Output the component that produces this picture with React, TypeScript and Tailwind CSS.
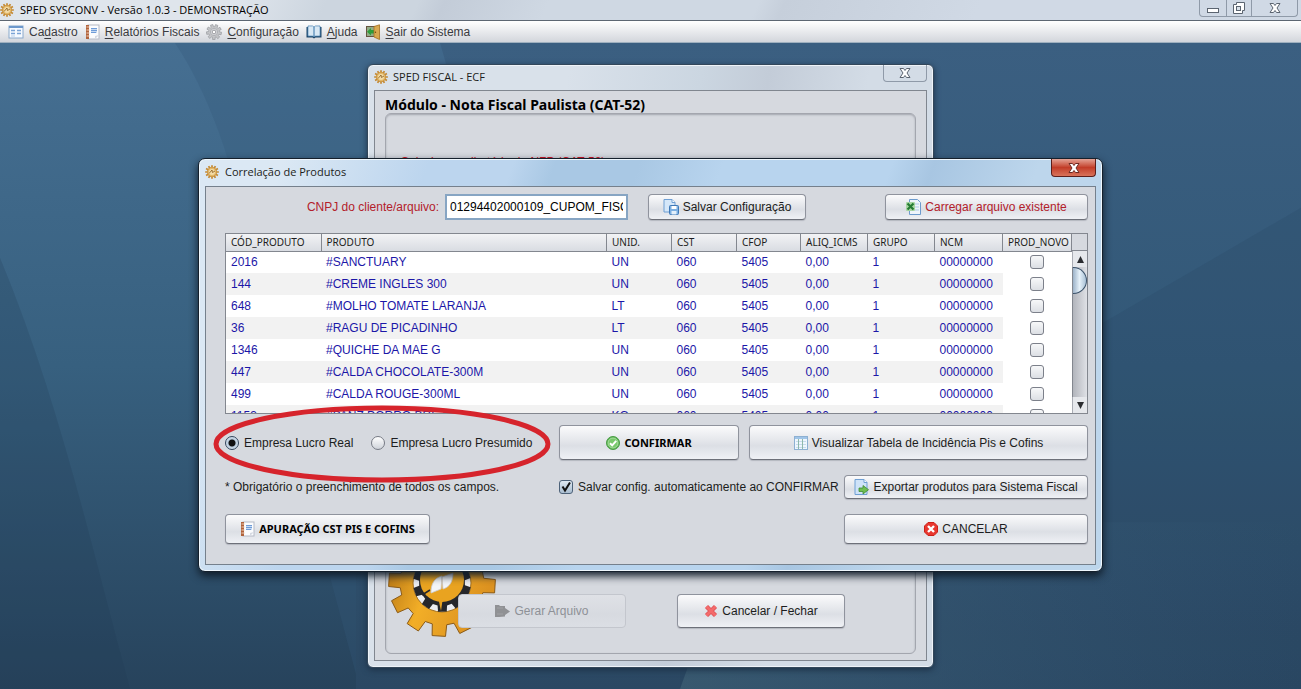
import React, { useState } from 'react';

type Produto = { cod: string; nome: string; unid: string };

const PRODUTOS: Produto[] = [
  { cod: '2016', nome: '#SANCTUARY', unid: 'UN' },
  { cod: '144', nome: '#CREME INGLES 300', unid: 'UN' },
  { cod: '648', nome: '#MOLHO TOMATE LARANJA', unid: 'LT' },
  { cod: '36', nome: '#RAGU DE PICADINHO', unid: 'LT' },
  { cod: '1346', nome: '#QUICHE DA MAE G', unid: 'UN' },
  { cod: '447', nome: '#CALDA CHOCOLATE-300M', unid: 'UN' },
  { cod: '499', nome: '#CALDA ROUGE-300ML', unid: 'UN' },
  { cod: '1153', nome: '#PANZ PORRO BRE UN', unid: 'KG' },
];

const COLUNAS = [
  { label: 'CÓD_PRODUTO', w: 'w-[95px]' },
  { label: 'PRODUTO', w: '' },
  { label: 'UNID.', w: 'w-[65px]' },
  { label: 'CST', w: 'w-[65px]' },
  { label: 'CFOP', w: 'w-[64px]' },
  { label: 'ALIQ_ICMS', w: 'w-[67px]' },
  { label: 'GRUPO', w: 'w-[67px]' },
  { label: 'NCM', w: 'w-[68px]' },
  { label: 'PROD_NOVO', w: 'w-[69px]' },
];

// Outline of a gear centred on (c, c), 4 points per tooth
const gearPath = (c: number, outer: number, inner: number, teeth: number, offset = 0) => {
  const step = (Math.PI * 2) / teeth;
  const pts: string[] = [];
  for (let i = 0; i < teeth; i++) {
    const a = i * step + offset;
    [[inner, -0.33], [outer, -0.24], [outer, 0.24], [inner, 0.33]].forEach(([r, k]) => {
      pts.push(`${(c + r * Math.cos(a + k * step)).toFixed(2)},${(c + r * Math.sin(a + k * step)).toFixed(2)}`);
    });
  }
  return `M${pts.join('L')}Z`;
};

/* ---------- icons ---------- */

const AppIcon = () => (
  <svg width="14" height="14" viewBox="0 0 14 14" className="shrink-0">
    <path d={gearPath(7, 6.9, 5, 12)} fill="#c48a35" />
    <circle cx="7" cy="7" r="4.4" fill="#e2b768" />
    <circle cx="7" cy="7" r="3" fill="#f3dca8" />
    <path d="M4 8.500 7 5l.5 2.500L10 6" stroke="#8a5c1c" strokeWidth=".8" fill="none" />
  </svg>
);

const FormIcon = () => (
  <svg width="16" height="14" viewBox="0 0 16 14">
    <rect x="1" y="1" width="14" height="12" fill="#f6faff" stroke="#8aa9cc" />
    <path d="M1 2h14" stroke="#6c98cc" strokeWidth="2" />
    <path d="M3 5.500h4M3 8.500h4M9 5.500h4M9 8.500h4" stroke="#7ba4d6" strokeWidth="1.500" />
    <path d="M3 11h4" stroke="#b9cfe8" />
  </svg>
);

const ReportIcon = () => (
  <svg width="15" height="16" viewBox="0 0 15 16" className="shrink-0">
    <rect x="3" y="1" width="11" height="14" fill="#fbfcfe" stroke="#b5bac6" />
    <path d="M1 1h3v14H1z" fill="#b0633c" />
    <path d="M1.500 3h3M1.500 6h3M1.500 9h3M1.500 12h3" stroke="#f0cdb6" />
    <path d="M6 4h6v5H6z" fill="#c8dbf3" />
    <path d="M6 4.500h6M6 6.500h6M6 8.500h5" stroke="#6f9cd8" />
    <path d="M10 15v-3l4-1z" fill="#d5d9e2" />
  </svg>
);

const CogIcon = () => (
  <svg width="16" height="16" viewBox="0 0 16 16">
    <path d={gearPath(8, 7.6, 5.4, 9, 0.2)} fill="#c4c5c8" stroke="#97999e" strokeWidth=".7" />
    <circle cx="8" cy="8" r="3.600" fill="#d9dadd" stroke="#a6a8ad" strokeWidth=".8" />
    <circle cx="8" cy="8" r="1.800" fill="#fff" stroke="#8b8d92" strokeWidth=".8" />
  </svg>
);

const BookIcon = () => (
  <svg width="16" height="14" viewBox="0 0 16 14">
    <path d="M.5 2h15v10.500H9.500L8 13.500l-1.500-1H.5z" fill="#1f4669" />
    <path d="M2 1h4.500L8 2v9.500L6.500 11H2zM14 1H9.500L8 2v9.500L9.500 11H14z" fill="#eef6fc" stroke="#4d86b5" strokeWidth=".8" />
    <path d="M4 2v8M6 2v8M10 2v8M12 2v8" stroke="#c3dbee" />
  </svg>
);

const DoorIcon = () => (
  <svg width="16" height="16" viewBox="0 0 16 16">
    <path d="M1 2h10v11H1z" fill="#66543f" />
    <path d="M2 3h7v9H2z" fill="#93ab87" />
    <path d="M9 6H6V4L2 7.800 6 11.500v-2h3z" fill="#2f9d3b" />
    <path d="M9 2.500 14.500.8v14.700L9 13z" fill="#d9a850" stroke="#a46e1e" strokeWidth=".8" />
    <circle cx="10.500" cy="8.200" r=".7" fill="#6c440c" />
  </svg>
);

const SaveIcon = () => (
  <svg width="16" height="16" viewBox="0 0 16 16">
    <path d="M1 .5h8l3 3V13H1z" fill="#d5e7f9" stroke="#6f9fd3" />
    <path d="M9 .5v3h3" fill="#fff" stroke="#6f9fd3" />
    <rect x="6.500" y="6.500" width="9" height="9" rx="1" fill="#7db0e2" stroke="#3f78b6" />
    <path d="M8.500 7h5v3h-5z" fill="#fff" />
    <path d="M8.500 12h5v3.500h-5z" fill="#e3effa" />
  </svg>
);

const ExcelIcon = () => (
  <svg width="15" height="16" viewBox="0 0 15 16">
    <path d="M3.500.5h8l3 3v12h-11z" fill="#eef4fb" stroke="#6c9bcd" />
    <path d="M9 5h4M9 8h4M9 11h4" stroke="#aecbe5" />
    <rect x="0" y="3" width="9" height="9" rx="1" fill="#a9d6a4" />
    <path d="M1.500 4.500l6 6M7.500 4.500l-6 6" stroke="#257c34" strokeWidth="2.200" />
  </svg>
);

const OkIcon = () => (
  <svg width="14" height="14" viewBox="0 0 14 14">
    <circle cx="7" cy="7" r="6.500" fill="#55b04c" stroke="#4a9c46" />
    <circle cx="7" cy="7" r="5" fill="#79c86c" stroke="#b8e4ae" strokeWidth=".8" />
    <path d="M4 7.200 6.200 9.400 10.200 4.800" stroke="#fff" strokeWidth="2" fill="none" />
  </svg>
);

const TableIcon = () => (
  <svg width="14" height="14" viewBox="0 0 14 14">
    <rect x=".5" y=".5" width="13" height="13" fill="#eef6fd" stroke="#8db0d2" />
    <path d="M1 2h12" stroke="#9fc4e8" strokeWidth="2" />
    <path d="M2 5.500h10M2 8.500h10M2 11.500h10" stroke="#c6dbed" />
    <path d="M4.500 3v10M8.500 3v10" stroke="#8fb8a9" />
  </svg>
);

const ExportIcon = () => (
  <svg width="15" height="16" viewBox="0 0 15 16">
    <path d="M1 .5h9l3 3v12H1z" fill="#cfe3f8" stroke="#6f9fd3" />
    <path d="M10 .5v3h3" fill="#fff" stroke="#6f9fd3" />
    <path d="M5 9h4V6.500l5.500 4.200L9 15v-2.500H5z" fill="#6fbf52" stroke="#3f8a32" strokeWidth=".8" />
  </svg>
);

const CancelIcon = () => (
  <svg width="14" height="14" viewBox="0 0 14 14">
    <path d="M4 .5h6L13.500 4v6L10 13.500H4L.5 10V4z" fill="#e8372f" stroke="#cc2018" />
    <path d="M4 4l6 6M10 4l-6 6" stroke="#fff" strokeWidth="2.400" />
  </svg>
);

const CrossIcon = () => (
  <svg width="14" height="14" viewBox="0 0 14 14">
    <path d="M2.500 2.500l9 9M11.500 2.500l-9 9" stroke="#e0575c" strokeWidth="4.500" />
    <path d="M2.500 2.500l9 9M11.500 2.500l-9 9" stroke="#f46b6b" strokeWidth="2.500" />
  </svg>
);

const GenerateIcon = () => (
  <svg width="15" height="14" viewBox="0 0 15 14">
    <path d="M0 1h4l1 1h5v2l5 3.500L10 11v1.500L4 13H0z" fill="#909194" />
    <path d="M2 4h6M2 10h6" stroke="#a0a1a4" />
  </svg>
);

const CloseGlyph = ({ light }: { light?: boolean }) => (
  <svg width="12" height="10" viewBox="0 0 12 10">
    <path d="M1 .5h3.500L6 2.500 7.500.5H11L8 5l3 4.500H7.500L6 7.500 4.500 9.500H1L4 5z" fill="#fff" stroke={light ? '#6e2a22' : '#5b6470'} strokeWidth="1" />
  </svg>
);

const Logo = () => (
  <svg width="108" height="108" viewBox="0 0 108 108" className="absolute bottom-4 left-0.5">
    <defs>
      <linearGradient id="gold" x1="0" y1="0" x2="1" y2=".4">
        <stop offset="0" stopColor="#a5650f" />
        <stop offset=".5" stopColor="#f2ae27" />
        <stop offset="1" stopColor="#dc9220" />
      </linearGradient>
    </defs>
    <path d={gearPath(54, 53.5, 42, 12, 0.06)} fill="url(#gold)" stroke="#8a5a17" strokeWidth="1" />
    <circle cx="54" cy="54" r="29" fill="#eceef2" stroke="#a3701f" strokeWidth="1" />
    <path d={gearPath(54, 29, 23, 10, 0.3)} fill="#26272b" />
    <circle cx="54" cy="51" r="22" fill="#e9a320" />
    <path d="M50 68h5l-2 14z" fill="#e9a320" />
    <path d="M34 66l8-5M70 33l5-5" stroke="#26272b" strokeWidth="1.500" />
    <path d="M43 64c0-9 3-15 11-17l-1 13zM54 48l1 12c7-2 10-8 10-16z" fill="#f3f5f8" stroke="#c9ccd3" strokeWidth=".8" />
  </svg>
);

const Wallpaper = () => (
  <svg className="absolute inset-0 h-full w-full" viewBox="0 0 1301 647" preserveAspectRatio="none">
    <defs>
      <linearGradient id="wpBase" x1="0" y1="0" x2="0" y2="1">
        <stop offset="0" stopColor="#466f92" />
        <stop offset=".5" stopColor="#37607f" />
        <stop offset="1" stopColor="#27435c" />
      </linearGradient>
      <linearGradient id="wpRight" x1="0" y1="0" x2="0" y2="1">
        <stop offset="0" stopColor="#3b5f81" />
        <stop offset=".5" stopColor="#325877" />
        <stop offset="1" stopColor="#2b4863" />
      </linearGradient>
      <linearGradient id="wpFloor" x1="0" y1="0" x2="1" y2="0">
        <stop offset="0" stopColor="#426478" stopOpacity=".6" />
        <stop offset="1" stopColor="#35597a" stopOpacity="0" />
      </linearGradient>
    </defs>
    <rect width="1301" height="647" fill="url(#wpBase)" />
    <path d="M0 215C60 360 90 500 130 647H0z" fill="#1f3850" opacity=".2" />
    <path d="M175 0C215 60 245 150 262 280L360 647H1301V0z" fill="#35597a" opacity=".3" />
    <path d="M440 0C452 40 458 70 460 120L356 500V647H1301V0z" fill="url(#wpRight)" />
    <path d="M1301 165L1100 282L680 500V647H1301z" fill="#1f3d59" opacity=".15" />
    <path d="M680 647L740 480H1301V647z" fill="url(#wpFloor)" />
  </svg>
);

/* ---------- controls ---------- */

type BotaoProps = React.ButtonHTMLAttributes<HTMLButtonElement> & { icon: React.ReactNode };

const Botao = ({ icon, children, className = '', ...rest }: BotaoProps) => (
  <button
    className={`flex shrink-0 items-center justify-center gap-1 rounded-[4px] border border-[#8f939d] border-b-[#6d7079] bg-linear-to-b from-[#fbfbfc] via-[#dcdfe5] via-60% to-[#eff1f5] whitespace-nowrap shadow-[0_1px_1px_#b4b7bf] disabled:border-[#c3c6cd] disabled:from-[#dfe1e6] disabled:via-[#d7dae0] disabled:to-[#dbdee4] disabled:text-[#8e9197] disabled:shadow-none ${className}`}
    {...rest}
  >
    {icon}
    <span>{children}</span>
  </button>
);

const Menu = ({ icon, before = '', mnemonic, after }: { icon: React.ReactNode; before?: string; mnemonic: string; after: string }) => (
  <button className="flex items-center gap-[5px] text-[#3a3b40]">
    {icon}
    <span>{before}<u className="underline-offset-2">{mnemonic}</u>{after}</span>
  </button>
);

const Tipo = ({ label, checked, onChange }: { label: string; checked: boolean; onChange: () => void }) => (
  <label className="flex items-center gap-[5px]">
    <input
      type="radio" name="empresa" checked={checked} onChange={onChange}
      className="size-3.5 appearance-none rounded-full border border-[#777b85] bg-linear-to-b from-white to-[#cfd3da] checked:border-[#31455c] checked:bg-[radial-gradient(circle,#111_0_3px,#b9cbdd_4px,#dce6ef_7px)]"
    />
    {label}
  </label>
);

const App: React.FC = () => {
  const [empresa, setEmpresa] = useState('real');
  const [salvar, setSalvar] = useState(true);
  const [arquivo, setArquivo] = useState('01294402000109_CUPOM_FISCAL');

  return (
    <div className="flex min-h-screen flex-col overflow-hidden font-['Liberation_Sans',Arial,sans-serif] text-[12px] leading-4 text-[#1c1d20]">
      <header className="flex h-[21px] items-start justify-between border-b border-[#5c6672] bg-[linear-gradient(115deg,#dfe5ec_0_18%,#ccd5df_25%_32%,#c3ccd8_34%,#cfd8e3_42%_58%,#c6cfdb_60%,#d0d9e5_75%)]">
        <div className="flex items-center gap-1.5 pt-0.5 font-['Open_Sans',sans-serif] text-[11px] text-black">
          <AppIcon />
          <span>SPED SYSCONV - Versão 1.0.3 - DEMONSTRAÇÃO</span>
        </div>
        <div className="mr-[3px] flex h-[17px] divide-x divide-[#8f9aa8] rounded-b-[4px] border border-t-0 border-[#8f9aa8]">
          <button aria-label="Minimizar" className="flex w-[27px] items-center justify-center pt-1">
            <svg width="12" height="5"><rect x=".5" y=".5" width="11" height="4" fill="#fff" stroke="#5b6470" /></svg>
          </button>
          <button aria-label="Restaurar" className="flex w-[25px] items-center justify-center">
            <svg width="12" height="12">
              <path d="M3.500.5h8v8h-2v3h-9v-9h3z" fill="#fff" stroke="#5b6470" />
              <rect x="3.500" y="4.500" width="4" height="4" fill="#dbe2ea" stroke="#5b6470" />
            </svg>
          </button>
          <button aria-label="Fechar" className="flex w-[45px] items-center justify-center"><CloseGlyph /></button>
        </div>
      </header>

      <nav className="flex h-[22px] items-center gap-[7px] border-b border-[#9fb0bf] bg-linear-to-b from-white to-[#d3d6dc] pl-2">
        <Menu icon={<FormIcon />} before="Ca" mnemonic="d" after="astro" />
        <Menu icon={<ReportIcon />} mnemonic="R" after="elatórios Fiscais" />
        <Menu icon={<CogIcon />} mnemonic="C" after="onfiguração" />
        <Menu icon={<BookIcon />} mnemonic="A" after="juda" />
        <Menu icon={<DoorIcon />} mnemonic="S" after="air do Sistema" />
      </nav>

      <main className="relative grow">
        <Wallpaper />

        {/* SPED FISCAL - ECF */}
        <section className="absolute inset-x-0 top-[21px] mx-auto w-[567px] rounded-[6px] border border-[#33475a] bg-[linear-gradient(100deg,#d9e1ea_0_30%,#cbd6e1_50%,#c3ccd8_60%,#d3dce6_75%)] px-1.5 pb-1.5 shadow-[inset_0_0_0_1px_#eef3f8,0_2px_6px_#1c3147]">
          <div className="flex h-[25px] items-start justify-between">
            <h2 className="flex items-center gap-[5px] pt-1 font-['Open_Sans',sans-serif] text-[11px]">
              <AppIcon />
              SPED FISCAL - ECF
            </h2>
            <button aria-label="Fechar" className="flex h-[17px] w-[44px] items-center justify-center rounded-b-[4px] border border-t-0 border-[#8f9aa8]"><CloseGlyph /></button>
          </div>
          <div className="flex flex-col border border-[#80868f] bg-[#d6d9df] px-2.5 py-1.5">
            <h3 className="font-['Noto_Sans',sans-serif] text-[14px] font-bold text-black">Módulo - Nota Fiscal Paulista (CAT-52)</h3>
            <div className="relative flex min-h-[541px] flex-col justify-between rounded-[6px] border border-[#a3a6ae] px-[15px] pt-10 pb-[25px] shadow-[inset_0_1px_2px_#a3a6ae]">
              <p className="text-[#d01525]">Selecione o diretório da NFP (CAT-52)</p>
              <Logo />
              <div className="relative flex gap-[51px] pl-[57px]">
                <Botao icon={<GenerateIcon />} disabled className="h-[34px] w-[168px]">Gerar Arquivo</Botao>
                <Botao icon={<CrossIcon />} className="h-[34px] w-[168px]">Cancelar / Fechar</Botao>
              </div>
            </div>
          </div>
        </section>

        {/* Correlação de Produtos */}
        <section className="absolute inset-x-0 top-[115px] mx-auto w-[905px] max-w-full rounded-[7px] border border-[#15202c] bg-[linear-gradient(110deg,#dbe8f4_0_8%,#bcd5ee_22%_30%,#a9c8e4_34%_42%,#b8d4ee_50%_66%,#a8c6e2_70%,#bdd6ec_80%)] px-1.5 pb-1.5 shadow-[inset_0_0_0_1px_#eff7fd,0_4px_9px_#101c29]">
          <div className="flex h-[27px] items-start justify-between">
            <h2 className="flex items-center gap-1.5 pt-[5px] font-['Open_Sans',sans-serif] text-[11px]">
              <AppIcon />
              Correlação de Produtos
            </h2>
            <button aria-label="Fechar" className="flex h-[18px] w-[45px] items-center justify-center rounded-b-[4px] border border-t-0 border-[#5d1e1a] bg-linear-to-b from-[#e3a295] via-[#c23c28] via-50% to-[#d8725a]"><CloseGlyph light /></button>
          </div>

          <div className="border border-[#75808c] bg-[#d6d9df] pt-[7px] pr-[7px] pb-5 pl-[19px]">
            <div className="flex items-center justify-end">
              <label htmlFor="cnpj" className="pr-1.5 text-[#b3202a]">CNPJ do cliente/arquivo:</label>
              <input
                id="cnpj" value={arquivo} onChange={e => setArquivo(e.target.value)}
                className="h-[26px] w-[183px] border-2 border-[#87a5c3] bg-white px-[3px] text-black outline-none"
              />
              <Botao icon={<SaveIcon />} className="ml-5 h-[26px] w-[158px]">Salvar Configuração</Botao>
              <Botao icon={<ExcelIcon />} className="ml-[79px] h-[26px] w-[203px] text-[#b3202a]">Carregar arquivo existente</Botao>
            </div>

            <div className="mt-[13px] flex h-[181px] border border-[#83878f] bg-white">
              <div className="min-w-0 flex-1 overflow-hidden">
                <table className="w-full table-fixed border-collapse">
                  <thead className="font-['Noto_Sans',sans-serif] text-[10px]">
                    <tr className="h-[17px] bg-linear-to-b from-[#f2f3f5] to-[#d9dce2]">
                      {COLUNAS.map(c => (
                        <th key={c.label} className={`border-r border-b border-[#83878f] p-0 pl-[5px] text-left font-normal whitespace-nowrap ${c.w}`}>{c.label}</th>
                      ))}
                    </tr>
                  </thead>
                  <tbody className="text-[#1c17a8]">
                    {PRODUTOS.map(p => (
                      <tr key={p.cod} className="h-[22px] bg-white even:bg-[#f2f2f2]">
                        {[p.cod, p.nome, p.unid, '060', '5405', '0,00', '1', '00000000'].map((v, i) => (
                          <td key={i} className="p-0 pl-[5px] whitespace-nowrap">{v}</td>
                        ))}
                        <td className="bg-white p-0">
                          <input type="checkbox" aria-label={`Produto novo ${p.cod}`} className="mx-auto block size-3.5 appearance-none rounded-[3px] border border-[#7c808a] bg-linear-to-b from-[#f7f8f9] to-[#dcdfe4]" />
                        </td>
                      </tr>
                    ))}
                  </tbody>
                </table>
              </div>
              <div className="flex w-[15px] shrink-0 flex-col bg-[#d6d9df]">
                <div className="h-[17px] border-b border-[#83878f]" />
                <div className="flex h-4 items-center justify-center border-l border-[#a9acb4] bg-[#e6e8ec] text-[#2b2c30]">
                  <svg width="7" height="7"><path d="M3.500 0 7 7H0z" fill="currentColor" /></svg>
                </div>
                <div className="grow overflow-hidden border-l border-[#83878f] bg-linear-to-r from-[#b2b5bc] to-[#dfe1e6]">
                  <div className="h-[27px] rounded-r-full border border-l-0 border-[#3c536b] bg-linear-to-r from-[#9db3c9] via-[#e6f1f9] to-[#a9c1d6]" />
                </div>
                <div className="flex h-4 items-center justify-center border-l border-[#a9acb4] bg-[#e6e8ec] text-[#2b2c30]">
                  <svg width="7" height="7"><path d="M3.500 7 7 0H0z" fill="currentColor" /></svg>
                </div>
              </div>
            </div>

            <div className="mt-[11px] flex items-center gap-2.5">
              <div className="relative flex flex-1 items-center gap-[18px]">
                <Tipo label="Empresa Lucro Real" checked={empresa === 'real'} onChange={() => setEmpresa('real')} />
                <Tipo label="Empresa Lucro Presumido" checked={empresa === 'presumido'} onChange={() => setEmpresa('presumido')} />
                <svg width="338" height="78" className="pointer-events-none absolute -top-[30px] -left-3">
                  <ellipse cx="169" cy="39" rx="166" ry="36" fill="none" stroke="#d6242c" strokeWidth="5" />
                </svg>
              </div>
              <Botao icon={<OkIcon />} className="h-[35px] w-[180px] font-['Noto_Sans',sans-serif] text-[11px] font-bold text-black">CONFIRMAR</Botao>
              <Botao icon={<TableIcon />} className="h-[35px] w-[339px]">Visualizar Tabela de Incidência Pis e Cofins</Botao>
            </div>

            <div className="mt-[15px] flex items-center">
              <p className="flex-1">* Obrigatório o preenchimento de todos os campos.</p>
              <label className="flex w-[285px] items-center gap-[5px] whitespace-nowrap">
                <span className="grid">
                  <input type="checkbox" checked={salvar} onChange={e => setSalvar(e.target.checked)} className="peer size-3.5 appearance-none rounded-[3px] border border-[#4d6279] bg-linear-to-b from-[#dfe9f2] to-[#a9bdd0] [grid-area:1/1]" />
                  <svg width="14" height="14" className="pointer-events-none hidden peer-checked:block [grid-area:1/1]">
                    <path d="M3.500 6.500 6 10.500 11 2.500" stroke="#111" strokeWidth="2" fill="none" />
                  </svg>
                </span>
                Salvar config. automaticamente ao CONFIRMAR
              </label>
              <Botao icon={<ExportIcon />} className="h-[24px] w-[244px]">Exportar produtos para Sistema Fiscal</Botao>
            </div>

            <div className="mt-[15px] flex items-center justify-between">
              <Botao icon={<ReportIcon />} className="h-[30px] w-[205px] font-['Noto_Sans',sans-serif] text-[11px] font-bold text-black">APURAÇÃO CST PIS E COFINS</Botao>
              <Botao icon={<CancelIcon />} className="h-[30px] w-[244px]">CANCELAR</Botao>
            </div>
          </div>
        </section>
      </main>
    </div>
  );
};

export default App;
